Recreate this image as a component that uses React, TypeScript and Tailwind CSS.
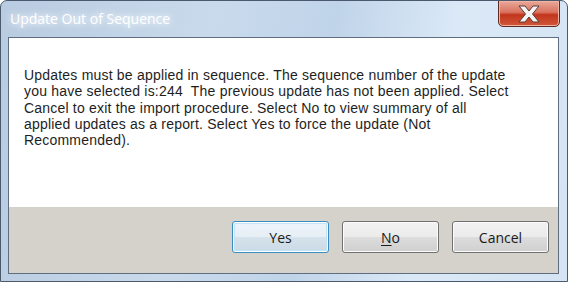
import React from "react";

const lines = [
  "Updates must be applied in sequence. The sequence number of the update",
  "you have selected is:244  The previous update has not been applied. Select",
  "Cancel to exit the import procedure. Select No to view summary of all",
  "applied updates as a report. Select Yes to force the update (Not",
  "Recommended).",
];

const Btn: React.FC<{ children: React.ReactNode; primary?: boolean }> = ({ children, primary }) => (
  <button
    className={
      "w-[97px] h-[32px] rounded-[3px] border text-[14px] text-[#1a1a1a] " +
      (primary
        ? "border-[#3c8dbf] bg-[linear-gradient(#eef5fa_0%,#e6eff5_49%,#d6e3ec_50%,#c9d9e4_100%)] shadow-[inset_0_0_0_1px_#ffffff,inset_0_0_1px_2px_#bfe3f7]"
        : "border-[#707070] bg-[linear-gradient(#f2f2f2_0%,#ebebeb_49%,#dddddd_50%,#cfcfcf_100%)] shadow-[inset_0_0_0_1px_#fcfcfc]")
    }
  >
    {children}
  </button>
);

export default function App() {
  return (
    <div
      className="w-[568px] h-[282px] relative overflow-hidden rounded-t-[7px] border border-[#4a5a6c] bg-[linear-gradient(100deg,#b8cbe0_0%,#c9daec_35%,#c0d4e9_55%,#dbe9f7_75%,#d4e4f4_100%)]"
      style={{ fontFamily: '"Open Sans", "Noto Sans", sans-serif' }}
    >
      {/* Title bar */}
      <div className="flex h-[36px] items-start justify-between">
        <div className="pl-[9px] pt-[7px] text-[14px] text-white [text-shadow:0_0_6px_#ffffff,0_0_10px_#e8f0f8]">
          Update Out of Sequence
        </div>
        <div className="mr-[7px] mt-[-1px] flex h-[27px] w-[62px] items-center justify-center rounded-b-[5px] border border-[#5b2a22] bg-[linear-gradient(#e8a99b_0%,#d9735f_45%,#c2351d_55%,#d0583a_100%)] shadow-[inset_0_0_0_1px_#f0b3a4]">
          <svg width="26" height="18" viewBox="0 0 26 18">
            <path
              d="M3 1 L9 1 L13 6 L17 1 L23 1 L16.5 9 L23 17 L17 17 L13 12 L9 17 L3 17 L9.5 9 Z"
              fill="#f4f4f4"
              stroke="#5a3a34"
              strokeWidth="1"
              strokeLinejoin="round"
            />
          </svg>
        </div>
      </div>

      {/* Client area */}
      <div className="ml-[7px] mr-[8px] flex h-[237px] flex-col border border-[#5e6e80]">
        <div className="h-[169px] bg-white pl-[15px] pt-[29px] font-['Liberation_Sans',Arial,sans-serif] text-[14px] leading-[16.25px] tracking-[0.2px] text-[#1e1e1e]">
          {lines.map((l, i) => (
            <div key={i} className="whitespace-pre">
              {l}
            </div>
          ))}
        </div>
        <div className="flex flex-1 items-start justify-end gap-[13px] bg-[#d5d1cb] pr-[9px] pt-[14px]">
          <Btn primary>Yes</Btn>
          <Btn>
            <span className="underline underline-offset-2">N</span>o
          </Btn>
          <Btn>Cancel</Btn>
        </div>
      </div>
    </div>
  );
}
